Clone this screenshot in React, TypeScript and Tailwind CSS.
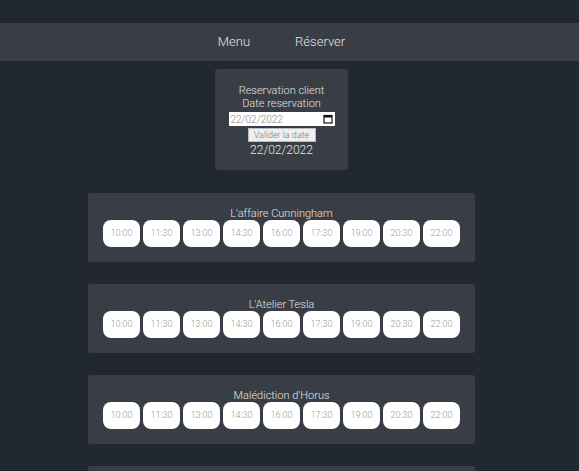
import React from "react";

const times = ["10:00", "11:30", "13:00", "14:30", "16:00", "17:30", "19:00", "20:30", "22:00"];
const games = ["L'affaire Cunningham", "L'Atelier Tesla", "Malédiction d'Horus", "Le Manoir"];

function CalendarIcon() {
  return (
    <svg width="10" height="10" viewBox="0 0 10 10" className="shrink-0">
      <rect x="1" y="1.5" width="8" height="7.5" fill="none" stroke="#111" strokeWidth="1.2" />
      <rect x="1" y="1.5" width="8" height="2" fill="#111" />
    </svg>
  );
}

export default function App() {
  return (
    <div
      className="min-h-screen bg-[#222831] pt-[23px] text-[#e4e4e4] font-light"
      style={{ fontFamily: "Roboto, 'Noto Sans', sans-serif" }}
    >
      <nav className="h-[38px] bg-[#393e46] flex items-center justify-center gap-[45px] pr-[16px] text-[13px]">
        <span>Menu</span>
        <span>Réserver</span>
      </nav>
      <main className="flex flex-col items-center pr-[16px]">
        <div className="mt-[8px] w-[133px] h-[101px] bg-[#393e46] rounded-[3px] flex flex-col items-center pt-[15px] text-[11px] leading-[13px]">
          <div>Reservation client</div>
          <div>Date reservation</div>
          <div className="mt-[2px] w-[106px] h-[14px] bg-white flex items-center justify-between pl-[2px] pr-[2px] text-[10px] text-[#888]">
            <span>22/02/2022</span>
            <CalendarIcon />
          </div>
          <div className="mt-[2px] w-[68px] h-[14px] bg-[#efefef] border border-[#bbb] flex items-center justify-center text-[9px] text-[#777]">
            Valider la date
          </div>
          <div className="mt-[2px] text-[12px]">22/02/2022</div>
        </div>
        <div className="mt-[23px] flex flex-col gap-[22px]">
          {games.map((g) => (
            <div key={g} className="w-[387px] h-[69px] bg-[#393e46] rounded-[3px] flex flex-col items-center pt-[14px]">
              <div className="text-[11px] leading-[13px]">{g}</div>
              <div className="flex gap-[3px]">
                {times.map((t) => (
                  <div
                    key={t}
                    className="w-[37px] h-[27px] bg-white rounded-[8px] flex items-center justify-center text-[9px] text-[#999]"
                  >
                    {t}
                  </div>
                ))}
              </div>
            </div>
          ))}
        </div>
      </main>
    </div>
  );
}
